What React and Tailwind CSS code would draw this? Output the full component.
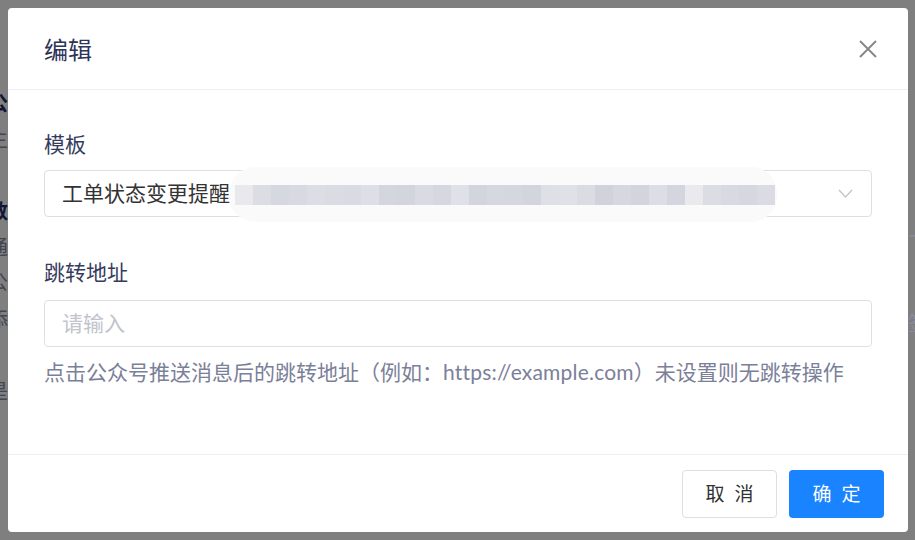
import React from 'react';

const FONT = { fontFamily: '"Noto Sans", "Noto Sans CJK SC", sans-serif' };

// pixelated placeholder for the blurred part of the template name
const MOSAIC = [
  '#e8e8ed', '#dcdde4', '#d6d8e1', '#d8d9e2', '#dcdde5', '#dadbe3', '#d9dae3', '#dedfe6',
  '#d4d6df', '#d3d5de', '#d9dae3', '#d6d7e0', '#e0e1e8', '#d3d5de', '#d6d8e0', '#d5d7e0',
  '#d3d5de', '#dfe0e7', '#e0e1e8', '#dadbe3', '#d1d3dc', '#d6d7e0', '#d3d5de', '#dcdde5',
  '#d4d6df', '#e9e9ee', '#dcdde4', '#d8d9e2', '#d6d8e1', '#dadbe3'
];

function BgPage() {
  return (
    <div className="w-full h-full bg-white relative overflow-hidden text-[20px]" style={FONT}>
      <div className="flex flex-col ml-[-12px] text-[#878ca4]">
        <div className="mt-[90px] leading-[28px] font-bold text-[#252a66]">公</div>
        <div className="leading-[28px] mt-[8px]">主</div>
        <div className="mt-[44px] leading-[28px] font-bold text-[#252a66]">数</div>
        <div className="mt-[8px] leading-[28px]">通</div>
        <div className="mt-[7px] leading-[28px]">公</div>
        <div className="mt-[9px] leading-[28px]">添</div>
        <div className="mt-[7px] leading-[28px]">d</div>
        <div className="mt-[9px] leading-[28px]">是</div>
      </div>
    </div>
  );
}

function Field({ label, children, className = '' }) {
  return (
    <div className={className}>
      <div className="text-[21px] leading-[32px] text-[#363b5e]">{label}</div>
      {children}
    </div>
  );
}

export default function App() {
  return (
    <div className="relative w-[915px] h-[540px] overflow-hidden" style={FONT}>
      <BgPage />
      <div className="absolute inset-0 bg-black/50" />
      <div className="absolute right-[-13px] top-[230px] flex flex-col text-[20px] text-[#878ca4] leading-[28px]">
        <div>一下</div>
        <div className="mt-[52px]">标签</div>
      </div>

      {/* dialog */}
      <div className="absolute left-[8px] top-[8px] w-[900px] h-[524px] bg-white rounded-[4px] flex flex-col">
        <div className="h-[82px] border-b border-[#ebeef5] flex items-center justify-between pl-[36px] pr-[31px] shrink-0">
          <div className="text-[24px] text-[#2f3459] leading-none mt-[2px]">编辑</div>
          <svg width="18" height="18" viewBox="0 0 18 18" className="mt-[1px]">
            <path d="M1 1 L17 17 M17 1 L1 17" stroke="#858585" strokeWidth="1.8" fill="none" />
          </svg>
        </div>

        <div className="h-[364px] px-[36px] pt-[38px] shrink-0">
          <Field label="模板">
            <div className="relative mt-[10px] h-[47px] border border-[#dcdfe6] rounded-[4px] flex items-center pl-[17px] pr-[18px]">
              <span className="text-[21px] text-[#333333] flex-1">工单状态变更提醒</span>
              <svg width="15" height="9" viewBox="0 0 15 9">
                <path d="M1 1 L7.5 8 L14 1" stroke="#c0c4cc" strokeWidth="1.3" fill="none" />
              </svg>
              <div className="absolute left-[184px] top-[-4px] w-[548px] h-[55px] rounded-[26px] bg-[#fafafb] flex items-center pl-[6px]">
                {MOSAIC.map((c, i) => (
                  <div key={i} className="h-[20px] w-[18px]" style={{ background: c }} />
                ))}
              </div>
            </div>
          </Field>

          <Field label="跳转地址" className="mt-[39px]">
            <div className="mt-[12px] h-[47px] border border-[#dcdfe6] rounded-[4px] flex items-center pl-[17px]">
              <span className="text-[21px] text-[#c0c4cc]">请输入</span>
            </div>
            <div className="mt-[9px] text-[21px] leading-[32px] text-[#7b8099] whitespace-nowrap">
              点击公众号推送消息后的跳转地址（例如：<span className="font-['Lato',sans-serif] tracking-[0.2px]">https://example.com</span>）未设置则无跳转操作
            </div>
          </Field>
        </div>

        <div className="flex-1 border-t border-[#ebeef5] flex justify-end items-start gap-[12px] pt-[15px] pr-[24px]">
          <button className="w-[95px] h-[48px] rounded-[4px] border border-[#dcdfe6] bg-white text-[19px] text-[#303133] flex items-center justify-center gap-[10px]">
            <span>取</span><span>消</span>
          </button>
          <button className="w-[95px] h-[48px] rounded-[4px] bg-[#1a83ff] text-[19px] text-white flex items-center justify-center gap-[10px]">
            <span>确</span><span>定</span>
          </button>
        </div>
      </div>
    </div>
  );
}
